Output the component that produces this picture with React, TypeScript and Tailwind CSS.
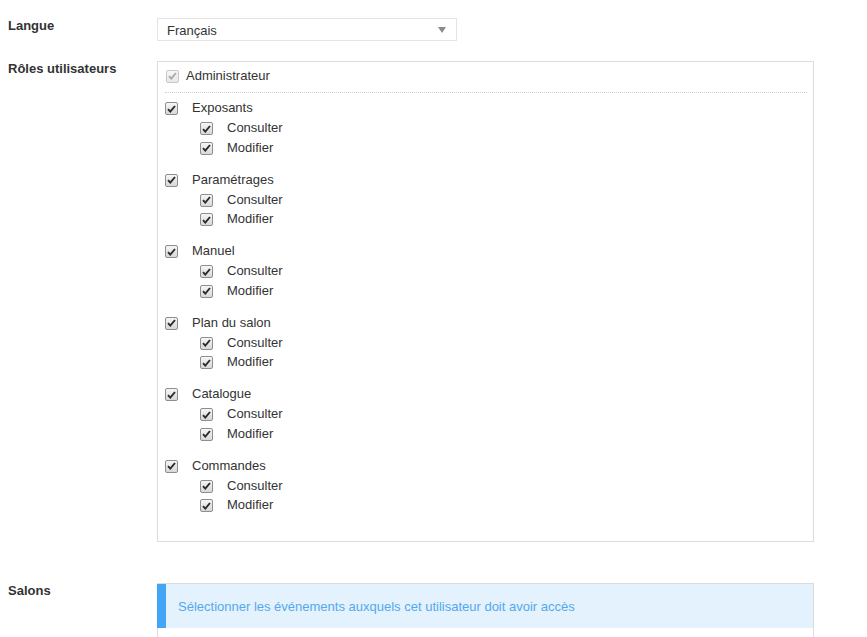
import React from 'react';

const font = { fontFamily: '"Liberation Sans", Arial, sans-serif' };

const Check = ({ disabled = false }: { disabled?: boolean }) => (
  <span
    className={`inline-flex w-[13px] h-[13px] shrink-0 items-center justify-center rounded-[2px] border ${
      disabled
        ? 'border-[#c8c8c8] bg-gradient-to-b from-[#f7f7f7] to-[#e8e8e8]'
        : 'border-[#8e8e8e] bg-gradient-to-b from-[#f6f6f6] to-[#d8d8d8]'
    }`}
  >
    <svg width="9" height="8" viewBox="0 0 9 8">
      <path
        d="M1 4.2 L3.3 6.6 L8 1"
        fill="none"
        stroke={disabled ? '#a9a9a9' : '#2b2b2b'}
        strokeWidth="1.9"
      />
    </svg>
  </span>
);

const groups = ['Exposants', 'Paramétrages', 'Manuel', 'Plan du salon', 'Catalogue', 'Commandes'];

const Label = ({ children }: { children: React.ReactNode }) => (
  <div className="w-[157px] shrink-0 pl-2 text-[13px] font-bold leading-[15px] text-[#333]">{children}</div>
);

export default function App() {
  return (
    <div className="min-h-[637px] bg-white text-[13px] text-[#333]" style={font}>
      {/* Langue */}
      <div className="flex pt-[18px]">
        <Label>Langue</Label>
        <div className="flex h-[23px] w-[300px] items-center justify-between border border-[#e4e4e4] pl-[9px] pr-[10px]">
          <span className="mt-[2px] text-[13px] text-[#333]">Français</span>
          <span className="h-0 w-0 border-x-[4px] border-t-[6px] border-x-transparent border-t-[#8a8a8a]" />
        </div>
      </div>

      {/* Rôles */}
      <div className="mt-[20px] flex">
        <Label>Rôles utilisateurs</Label>
        <div className="h-[481px] w-[657px] border border-[#dcdcdc] pl-[7px] pr-[6px] pt-[3px]">
          <div className="flex h-[20px] items-center">
            <span className="ml-px mt-[2px]">
              <Check disabled />
            </span>
            <span className="ml-[7px] mt-[2px]">Administrateur</span>
          </div>
          <div className="mt-[7px] mb-[4px] border-t border-dotted border-[#cfcfcf]" />
          {groups.map((g) => (
            <div key={g} className="mb-[12.5px]">
              <div className="flex h-[20px] items-center">
                <span className="mt-[3px]">
                  <Check />
                </span>
                <span className="ml-[14px] mt-[2px]">{g}</span>
              </div>
              {['Consulter', 'Modifier'].map((s) => (
                <div key={s} className="flex h-[19.5px] items-center pl-[35px]">
                  <span className="mt-[3px]">
                    <Check />
                  </span>
                  <span className="ml-[14px] mt-[2px]">{s}</span>
                </div>
              ))}
            </div>
          ))}
        </div>
      </div>

      {/* Salons */}
      <div className="mt-[41px] flex">
        <Label>Salons</Label>
        <div className="w-[657px] border-x border-t border-[#dcdcdc]">
          <div className="-ml-px flex h-[44px] items-center border-l-[9px] border-[#42a5f5] bg-[#e3f2fd] pl-[12px] pt-[2px] text-[13px] text-[#55a8ee]">
            Sélectionner les événements auxquels cet utilisateur doit avoir accès
          </div>
          <div className="h-[30px]" />
        </div>
      </div>
    </div>
  );
}
